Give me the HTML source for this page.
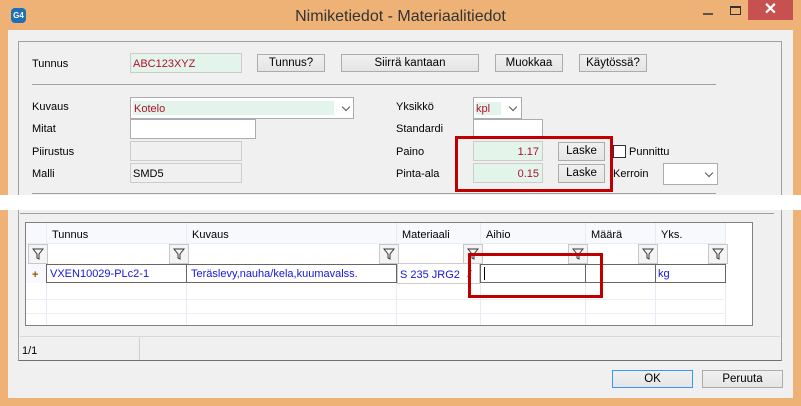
<!DOCTYPE html>
<html><head><meta charset="utf-8"><style>
*{box-sizing:border-box;margin:0;padding:0}
body{width:801px;height:406px;overflow:hidden;background:#eeb277;font-family:"Liberation Sans",sans-serif;font-size:11px;color:#000;position:relative}
.a{position:absolute}
.t{position:absolute;white-space:nowrap;line-height:14px}
.tb{position:absolute;border:1px solid #abadb3;background:#fff}
.btn{position:absolute;border:1px solid #acacac;background:linear-gradient(#f0f0f0,#e5e5e5);text-align:center;line-height:16px;font-size:11.5px}
.g{background:#e3f4ea}
.red{color:#b3102e}
.blue{color:#1515e0}
.hl{position:absolute;height:1px;background:#a0a0a0}
.fil{position:absolute;width:20px;height:20px;border:1px solid #c8c8c8;background:#f4f4f4}
.fil svg{position:absolute;left:3px;top:3px}
.chev{position:absolute;width:6px;height:6px;border-right:1.5px solid #555;border-bottom:1.5px solid #555;transform:rotate(45deg)}
</style></head><body>
<div class="a" style="left:11px;top:8px;width:15px;height:15px;background:#1f6fb5;border-radius:4px;color:#fff;font-size:8px;font-weight:bold;text-align:center;line-height:15px">G4</div>
<div class="t" style="left:0;width:801px;text-align:center;top:8px;font-size:16px;line-height:18px;color:#333">Nimiketiedot - Materiaalitiedot</div>
<div class="a" style="left:703px;top:13px;width:10px;height:2px;background:#555"></div>
<div class="a" style="left:730px;top:6px;width:11px;height:9px;border:1px solid #333;border-top-width:2px"></div>
<div class="a" style="left:748px;top:0;width:45px;height:20px;background:#c75050;color:#fff;text-align:center;font-size:16px;line-height:20px;font-weight:bold">✕</div>
<div class="a" style="left:8px;top:30px;width:785px;height:368px;background:#f0f0f0"></div>
<div class="a" style="left:18px;top:41px;width:764px;height:320px;border:1px solid #a0a0a0;border-bottom:1px solid #707070"></div>

<div class="t" style="left:32px;top:57px">Tunnus</div>
<div class="tb g" style="left:130px;top:53px;width:112px;height:20px;border-color:#ccc"></div>
<div class="t red" style="left:133px;top:57px">ABC123XYZ</div>
<div class="btn" style="left:257px;top:54px;width:68px;height:18px">Tunnus?</div>
<div class="btn" style="left:341px;top:54px;width:138px;height:18px">Siirrä kantaan</div>
<div class="btn" style="left:495px;top:54px;width:68px;height:18px">Muokkaa</div>
<div class="btn" style="left:579px;top:54px;width:68px;height:18px">Käytössä?</div>
<div class="hl" style="left:32px;top:84px;width:684px"></div>

<div class="t" style="left:32px;top:100px">Kuvaus</div>
<div class="tb" style="left:130px;top:97px;width:224px;height:22px"></div>
<div class="a g" style="left:133px;top:101px;width:201px;height:14px"></div>
<div class="t red" style="left:134px;top:102px">Kotelo</div>
<div class="chev" style="left:343px;top:104px"></div>
<div class="t" style="left:32px;top:122px">Mitat</div>
<div class="tb" style="left:130px;top:119px;width:126px;height:20px"></div>
<div class="t" style="left:32px;top:145px">Piirustus</div>
<div class="tb" style="left:130px;top:141px;width:112px;height:20px;background:#f0f0f0;border-color:#ccc"></div>
<div class="t" style="left:32px;top:167px">Malli</div>
<div class="tb" style="left:130px;top:163px;width:112px;height:20px;background:#f0f0f0;border-color:#ccc"></div>
<div class="t" style="left:133px;top:167px">SMD5</div>

<div class="t" style="left:396px;top:100px">Yksikkö</div>
<div class="tb" style="left:473px;top:97px;width:49px;height:22px"></div>
<div class="a g" style="left:476px;top:102px;width:25px;height:13px"></div>
<div class="t red" style="left:476px;top:102px">kpl</div>
<div class="chev" style="left:510px;top:104px"></div>
<div class="t" style="left:396px;top:122px">Standardi</div>
<div class="tb" style="left:473px;top:119px;width:70px;height:20px"></div>
<div class="t" style="left:396px;top:145px">Paino</div>
<div class="tb g" style="left:473px;top:141px;width:70px;height:20px;border-color:#ccc"></div>
<div class="t red" style="left:473px;top:145px;width:66px;text-align:right">1.17</div>
<div class="btn" style="left:558px;top:142px;width:47px;height:19px">Laske</div>
<div class="t" style="left:396px;top:167px">Pinta-ala</div>
<div class="tb g" style="left:473px;top:163px;width:70px;height:20px;border-color:#ccc"></div>
<div class="t red" style="left:473px;top:167px;width:66px;text-align:right">0.15</div>
<div class="btn" style="left:558px;top:164px;width:47px;height:19px">Laske</div>
<div class="a" style="left:455px;top:136px;width:158px;height:56px;border:3px solid #c00000"></div>
<div class="tb" style="left:613px;top:145px;width:13px;height:13px;border-color:#333"></div>
<div class="t" style="left:629px;top:145px">Punnittu</div>
<div class="t" style="left:613px;top:167px">Kerroin</div>
<div class="tb" style="left:663px;top:163px;width:55px;height:22px"></div>
<div class="chev" style="left:706px;top:170px"></div>
<div class="hl" style="left:32px;top:193px;width:684px"></div>

<div class="a" style="left:0;top:195px;width:801px;height:15px;background:#fff"></div>
<div class="hl" style="left:20px;top:213px;width:754px"></div>

<div class="a" style="left:25px;top:222px;width:728px;height:104px;border:1px solid #808080;background:#fff"></div>
<div class="a" style="left:26px;top:223px;width:700px;height:20px;background:#f7f9fc"></div>
<div class="a" style="left:26px;top:243px;width:700px;height:1px;background:#e8eef6"></div>
<div class="a" style="left:26px;top:244px;width:20px;height:39px;background:#f7f9fc"></div>
<div class="t" style="left:52px;top:228px">Tunnus</div>
<div class="t" style="left:192px;top:228px">Kuvaus</div>
<div class="t" style="left:402px;top:228px">Materiaali</div>
<div class="t" style="left:486px;top:228px">Aihio</div>
<div class="t" style="left:591px;top:228px">Määrä</div>
<div class="t" style="left:661px;top:228px">Yks.</div>
<div class="a" style="left:46px;top:223px;width:1px;height:102px;background:#e6ecf4"></div>
<div class="a" style="left:186px;top:223px;width:1px;height:102px;background:#e6ecf4"></div>
<div class="a" style="left:396px;top:223px;width:1px;height:102px;background:#e6ecf4"></div>
<div class="a" style="left:480px;top:223px;width:1px;height:102px;background:#e6ecf4"></div>
<div class="a" style="left:585px;top:223px;width:1px;height:102px;background:#e6ecf4"></div>
<div class="a" style="left:655px;top:223px;width:1px;height:102px;background:#e6ecf4"></div>
<div class="a" style="left:725px;top:223px;width:1px;height:102px;background:#e6ecf4"></div>
<div class="a" style="left:26px;top:299px;width:700px;height:1px;background:#eceff4"></div>
<div class="a" style="left:26px;top:313px;width:700px;height:1px;background:#eceff4"></div>
<div class="fil" style="left:28px;top:244px"><svg width="12" height="12"><path d="M1 1H11L7 6V11L5 10V6Z" fill="none" stroke="#333"/></svg></div>
<div class="fil" style="left:169px;top:244px"><svg width="12" height="12"><path d="M1 1H11L7 6V11L5 10V6Z" fill="none" stroke="#333"/></svg></div>
<div class="fil" style="left:379px;top:244px"><svg width="12" height="12"><path d="M1 1H11L7 6V11L5 10V6Z" fill="none" stroke="#333"/></svg></div>
<div class="fil" style="left:463px;top:244px"><svg width="12" height="12"><path d="M1 1H11L7 6V11L5 10V6Z" fill="none" stroke="#333"/></svg></div>
<div class="fil" style="left:568px;top:244px"><svg width="12" height="12"><path d="M1 1H11L7 6V11L5 10V6Z" fill="none" stroke="#333"/></svg></div>
<div class="fil" style="left:638px;top:244px"><svg width="12" height="12"><path d="M1 1H11L7 6V11L5 10V6Z" fill="none" stroke="#333"/></svg></div>
<div class="fil" style="left:708px;top:244px"><svg width="12" height="12"><path d="M1 1H11L7 6V11L5 10V6Z" fill="none" stroke="#333"/></svg></div>
<div class="t" style="left:32px;top:268px;font-weight:bold;color:#a05000">+</div>
<div class="a" style="left:46px;top:264px;width:141px;height:19px;border:1px solid #666"></div>
<div class="a" style="left:186px;top:264px;width:211px;height:19px;border:1px solid #666"></div>
<div class="a" style="left:397px;top:263px;width:83px;height:21px;border:1px solid #ccc;background:#fff"></div>
<div class="a" style="left:480px;top:264px;width:106px;height:19px;border:1px solid #666"></div>
<div class="a" style="left:585px;top:264px;width:71px;height:19px;border:1px solid #666"></div>
<div class="a" style="left:655px;top:264px;width:71px;height:19px;border:1px solid #666"></div>
<div class="t blue" style="left:50px;top:267px">VXEN10029-PLc2-1</div>
<div class="t blue" style="left:191px;top:267px">Teräslevy,nauha/kela,kuumavalss.</div>
<div class="t blue" style="left:400px;top:268px">S 235 JRG2</div>
<div class="t" style="left:469px;top:268px;font-size:10px;color:#555">⁄</div>
<div class="a" style="left:484px;top:267px;width:1px;height:13px;background:#000"></div>
<div class="t blue" style="left:658px;top:267px">kg</div>
<div class="a" style="left:468px;top:253px;width:135px;height:45px;border:3px solid #c00000"></div>
<div class="hl" style="left:20px;top:336px;width:760px;background:#d8d8d8"></div>
<div class="t" style="left:22px;top:344px">1/1</div>
<div class="a" style="left:139px;top:338px;width:1px;height:22px;background:#d0d0d0"></div>
<div class="btn" style="left:612px;top:370px;width:81px;height:18px;border-color:#3399ff">OK</div>
<div class="btn" style="left:702px;top:370px;width:81px;height:18px">Peruuta</div>
</body></html>
